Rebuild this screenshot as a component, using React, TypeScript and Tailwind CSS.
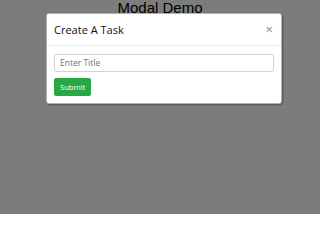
import React from 'react';

export default function App() {
  return (
    <div className="relative h-[214px] w-[320px] overflow-hidden bg-[#f8f8f8] font-['Open_Sans',sans-serif]">
      <header className="h-[26px] border-b border-white bg-[#f8f8f8]">
        <h1 className="m-0 text-center font-['Liberation_Sans',Arial,sans-serif] text-[15px] leading-none text-black">
          Modal Demo
        </h1>
      </header>

      {/* backdrop + dialog */}
      <div className="absolute inset-0 flex justify-center bg-black/50 pt-[13px]">
        <div className="ml-[8px] h-fit w-[236px] rounded-[3px] border border-black/30 bg-white shadow-[1px_1px_2px_rgba(0,0,0,0.35)]">
          <div className="flex items-start border-b border-[#e9ecef] pl-[7px] pr-[8px] pt-[8px] pb-[6px]">
            <h5 className="m-0 text-[11px] font-medium leading-[16.5px] text-[#111]">Create A Task</h5>
            <span className="ml-auto mt-[1px] text-[13px] leading-none text-[#8a8a8a]">×</span>
          </div>
          <div className="px-[7px] pt-[8px] pb-[7px]">
            <input
              type="text"
              placeholder="Enter Title"
              className="block h-[18px] w-full rounded-[2px] border border-[#ced4da] bg-white px-[5px] text-[8.5px] text-[#495057] outline-none placeholder:text-[#6c757d]"
            />
            <button className="mt-[4px] h-[18px] rounded-[2px] border border-[#28a745] bg-[#28a745] px-[5px] text-[7.6px] font-medium leading-none text-white">
              Submit
            </button>
          </div>
        </div>
      </div>
    </div>
  );
}
